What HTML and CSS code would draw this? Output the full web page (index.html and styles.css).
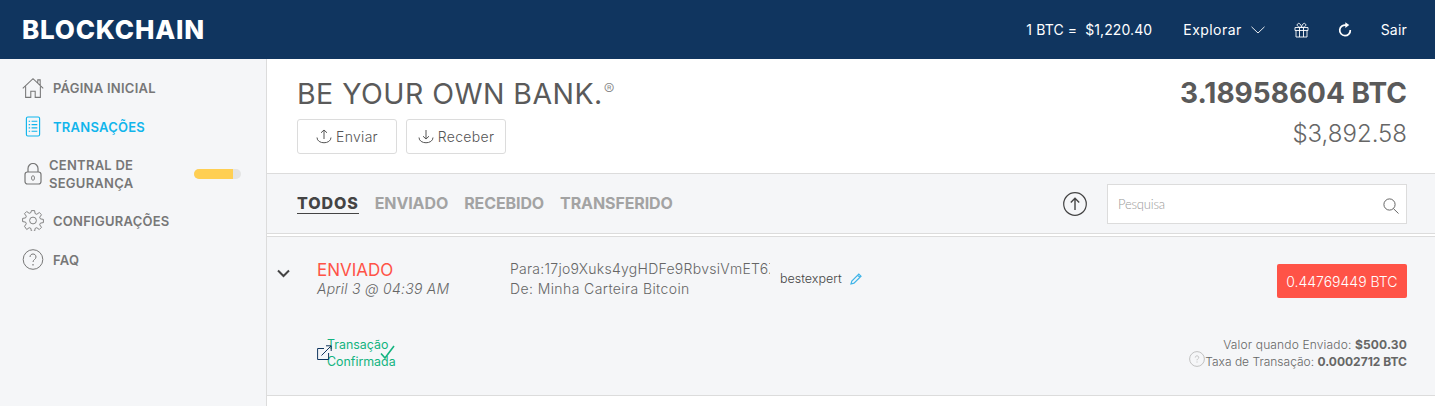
FILE: index.html
```html
<!DOCTYPE html>
<html lang="en">
<head>
    <meta charset="UTF-8">
    <meta name="viewport" content="width=device-width, initial-scale=1.0">
    <title>Blockchain Wallet</title>
    <link rel="stylesheet" href="styles.css">
</head>
<body>
    <header class="topbar">
        <div class="logo">BLOCKCHAIN</div>
        <nav class="topnav">
            <span class="rate">1 BTC = &nbsp;$1,220.40</span>
            <a href="#" class="explore">Explorar
                <svg width="14" height="8" viewBox="0 0 14 8"><path d="M.5.8 7 7l6.500-6.200" fill="none" stroke="#fff" stroke-width=".9"/></svg>
            </a>
            <svg class="gift" width="15" height="16" viewBox="0 0 15 16" fill="none" stroke="#fff" stroke-width=".9"><path d="M1 5.500h13v3H1zM2 8.500V15h11V8.500M5.500 5.500V15M9.500 5.500V15M7.500 5.500C4 5.500 2.500 3.500 3.500 2s3.500-.5 4 3.500c.5-4 3-5 4-3.500s-.5 3.500-4 3.500z"/></svg>
            <svg class="refresh" width="14" height="15" viewBox="0 0 14 15" fill="none"><path d="M8.200 3.200A5.300 5.300 0 1 0 12.300 8" stroke="#fff" stroke-width="1.700"/><path d="M7.300 .3v5.600l4-2.800z" fill="#fff"/></svg>
            <a href="#" class="logout">Sair</a>
        </nav>
    </header>

    <div class="layout">
        <aside class="sidebar">
            <a href="#" class="side-item">
                <svg class="side-icon" width="23" height="22" viewBox="0 0 23 22" fill="none" stroke="#777" stroke-width="1.100"><path d="M.8 11.500 11.500 1.200 22.200 11.500M3.800 9.500v11.300h5.400v-6.500h4.600v6.500h5.400V9.500M16.500 5.500V2.500h2.500v5.300"/></svg>
                <span>PÁGINA INICIAL</span>
            </a>
            <a href="#" class="side-item active">
                <svg class="side-icon" width="23" height="21" viewBox="0 0 23 21" fill="none" stroke="#10b5ec" stroke-width="1.200"><rect x="4.600" y=".6" width="13.800" height="19.800" rx="1.500"/><path d="M7 5h1.500M10 5h6M7 8.500h1.500M10 8.500h6M7 12h1.500M10 12h6M7 15.500h1.500M10 15.500h6"/></svg>
                <span>TRANSAÇÕES</span>
            </a>
            <a href="#" class="side-item security">
                <svg class="side-icon" width="18" height="22" viewBox="0 0 18 22" fill="none" stroke="#777" stroke-width="1.200"><path d="M4 9V5.500a5 5 0 0 1 10 0V9"/><rect x="1" y="9" width="16" height="12" rx="2.500"/><ellipse cx="9" cy="15" rx="1.500" ry="2.300" stroke-width=".9"/></svg>
                <span class="security-label">CENTRAL DE SEGURANÇA</span>
                <span class="meter"><span class="meter-fill" style="width: 83%"></span></span>
            </a>
            <a href="#" class="side-item">
                <svg class="side-icon" width="21" height="21" viewBox="0 0 21 21" fill="none" stroke="#777" stroke-width=".9"><circle cx="10.500" cy="10.500" r="3.400"/><path d="M8.900 .6h3.200l.5 3 1.700.7 2.500-1.800 2.200 2.200-1.800 2.500.7 1.700 3 .5v3.200l-3 .5-.7 1.700 1.800 2.500-2.200 2.200-2.500-1.800-1.700.7-.5 3H8.900l-.5-3-1.700-.7-2.500 1.800L2 16.300l1.800-2.500-.7-1.700-3-.5V8.400l3-.5.700-1.700L2 3.700l2.200-2.200 2.500 1.800 1.700-.7z"/></svg>
                <span>CONFIGURAÇÕES</span>
            </a>
            <a href="#" class="side-item">
                <svg class="side-icon" width="21" height="21" viewBox="0 0 21 21" fill="none" stroke="#777" stroke-width="1"><circle cx="10.500" cy="10.500" r="9.800"/><path d="M7.500 8c0-4 6-4 6 0 0 2.500-3 2.500-3 5"/><path d="M10.500 15v1.400" stroke-width="1.200"/></svg>
                <span>FAQ</span>
            </a>
        </aside>

        <main class="content">
            <section class="hero">
                <div class="hero-left">
                    <h1 class="tagline">BE YOUR OWN BANK.<sup>®</sup></h1>
                    <div class="hero-actions">
                        <a href="#" class="btn">
                            <svg width="16" height="15" viewBox="0 0 16 15" fill="none" stroke="#555" stroke-width="1"><path d="M1 8.500c0 7 14 7 14 0M8 10V1M5 3.800 8 1l3 2.800"/></svg>
                            Enviar
                        </a>
                        <a href="#" class="btn">
                            <svg width="16" height="15" viewBox="0 0 16 15" fill="none" stroke="#555" stroke-width="1"><path d="M1 8.500c0 7 14 7 14 0M8 1v9M5 7.200 8 10l3-2.800"/></svg>
                            Receber
                        </a>
                    </div>
                </div>
                <div class="balance">
                    <div class="balance-btc">3.18958604 BTC</div>
                    <div class="balance-usd">$3,892.58</div>
                </div>
            </section>

            <section class="filters">
                <div class="tabs">
                    <a href="#" class="tab current">TODOS</a>
                    <a href="#" class="tab">ENVIADO</a>
                    <a href="#" class="tab">RECEBIDO</a>
                    <a href="#" class="tab">TRANSFERIDO</a>
                </div>
                <svg class="export" width="24" height="24" viewBox="0 0 24 24" fill="none" stroke="#444" stroke-width="1.200"><circle cx="12" cy="12" r="11.300"/><path d="M12 18V6.500M7.800 10.500 12 6.300l4.200 4.200" stroke-width="1.400"/></svg>
                <div class="search">
                    <span class="search-text">Pesquisa</span>
                    <svg class="search-icon" width="16" height="16" viewBox="0 0 16 16" fill="none" stroke="#555" stroke-width=".9"><circle cx="6.500" cy="6.500" r="5.600"/><path d="m10.500 10.700 5 4.800"/></svg>
                </div>
            </section>

            <section class="tx">
                <div class="tx-top">
                    <svg class="tx-toggle" width="13" height="9" viewBox="0 0 13 9" fill="none" stroke="#444" stroke-width="2"><path d="m1 1.500 5.500 5.500L12 1.500"/></svg>
                    <div class="tx-status">
                        <div class="tx-type">ENVIADO</div>
                        <div class="tx-date">April 3 @ 04:39 AM</div>
                    </div>
                    <div class="tx-addr">
                        <div class="tx-to">Para:17jo9Xuks4ygHDFe9RbvsiVmET6Zqw8kL</div>
                        <div class="tx-from">De: Minha Carteira Bitcoin</div>
                    </div>
                    <div class="tx-label">
                        <span>bestexpert</span>
                        <svg width="12" height="12" viewBox="0 0 12 12" fill="none" stroke="#3fb4e8" stroke-width="1.200"><path d="M1 11l.8-3L8.800 1l2.200 2.200-7 7zM7.600 2.200l2.200 2.200"/></svg>
                    </div>
                    <div class="tx-amount">0.44769449 BTC</div>
                </div>
                <div class="tx-bottom">
                    <div class="tx-confirm">
                        <svg class="tx-link" width="15" height="15" viewBox="0 0 15 15" fill="none" stroke="#10355f" stroke-width="1"><path d="M7 3.500H.6v11h11V8M4.500 10.500 14 1M9 .8h5.200V6"/></svg>
                        <span class="tx-confirm-text">Transação Confirmada</span>
                        <svg class="tx-check" width="15" height="14" viewBox="0 0 15 14" fill="none" stroke="#13b47f" stroke-width="1.600"><path d="M1 8.500 5 13 14 1"/></svg>
                    </div>
                    <div class="tx-values">
                        <div class="tx-worth">Valor quando Enviado: <b>$500.30</b></div>
                        <div class="tx-fee">
                            <svg class="tx-help" width="16" height="16" viewBox="0 0 16 16" fill="none" stroke="#bbb" stroke-width=".9"><circle cx="8" cy="8" r="7.400"/><path d="M6.300 6.500c0-2.200 3.400-2.200 3.400 0 0 1.400-1.700 1.400-1.700 2.800M8 10.500v1"/></svg>
                            <span>Taxa de Transação: <b>0.0002712 BTC</b></span>
                        </div>
                    </div>
                </div>
            </section>
        </main>
    </div>
</body>
</html>
```

FILE: styles.css
```css
/* General Styles */
* {
    box-sizing: border-box;
}

body {
    font-family: 'Inter', 'Liberation Sans', sans-serif;
    margin: 0;
    padding: 0;
    background-color: #fff;
    color: #555;
    overflow: hidden;
}

a {
    color: inherit;
    text-decoration: none;
}

/* Header */
.topbar {
    height: 59px;
    background-color: #10355f;
    color: #fff;
    display: flex;
    justify-content: space-between;
    align-items: center;
    padding: 0 28px 0 22px;
}

.logo {
    font-size: 26px;
    font-weight: 800;
    letter-spacing: 0.8px;
}

.topnav {
    display: flex;
    align-items: center;
    font-size: 14px;
    letter-spacing: 0.2px;
}

.rate {
    letter-spacing: 0.1px;
    margin-right: 31px;
}

.explore {
    display: flex;
    align-items: center;
    gap: 9px;
    margin-right: 29px;
    letter-spacing: 0.45px;
}

.gift {
    margin-right: 29px;
}

.refresh {
    margin-right: 29px;
}

/* Sidebar */
.layout {
    display: flex;
    height: 347px;
}

.sidebar {
    width: 267px;
    flex-shrink: 0;
    background-color: #f5f6f8;
    border-right: 1px solid #dcdcdc;
    padding-top: 9px;
}

.side-item {
    height: 39px;
    display: flex;
    align-items: center;
    padding-left: 22px;
    color: #777;
    font-size: 13px;
    font-weight: 600;
    letter-spacing: 0.25px;
}

.side-icon {
    margin-right: 9px;
    width: 22px;
    flex-shrink: 0;
}

.side-item.active {
    color: #10b5ec;
}

.side-item.security {
    height: 55px;
    line-height: 18px;
}

.security .side-icon {
    margin-right: 5px;
}

.security-label {
    width: 135px;
    margin-right: 10px;
}

.meter {
    width: 47px;
    height: 10px;
    border-radius: 5px;
    background-color: #e4e4e4;
    overflow: hidden;
}

.meter-fill {
    display: block;
    height: 100%;
    background-color: #ffcf53;
}

/* Balance */
.content {
    flex: 1;
    min-width: 0;
}

.hero {
    height: 115px;
    display: flex;
    justify-content: space-between;
    padding: 19px 28px 0 30px;
    border-bottom: 1px solid #dcdcdc;
}

.tagline {
    margin: 0;
    font-size: 28.5px;
    line-height: 32px;
    font-weight: 400;
    letter-spacing: 0.45px;
    color: #5a5a5a;
}

.tagline sup {
    font-size: 16px;
    line-height: 0;
    font-weight: 300;
    color: #888;
    vertical-align: 9px;
    margin-left: 1px;
}

.hero-actions {
    display: flex;
    gap: 9px;
    margin-top: 9px;
}

.btn {
    width: 100px;
    height: 35px;
    display: flex;
    align-items: center;
    justify-content: center;
    gap: 4px;
    border: 1px solid #dcdcdc;
    border-radius: 3px;
    font-size: 14px;
    font-weight: 300;
    letter-spacing: 0.3px;
}

.balance {
    text-align: right;
}

.balance-btc {
    font-size: 28px;
    line-height: 30px;
    font-weight: 700;
    color: #5a5a5a;
}

.balance-usd {
    font-size: 24px;
    line-height: 30px;
    font-weight: 300;
    margin-top: 11px;
    color: #666;
}

/* Filters */
.filters {
    height: 60px;
    background-color: #f5f6f8;
    border-bottom: 1px solid #dcdcdc;
    display: flex;
    align-items: center;
    padding: 0 28px 0 30px;
}

.tabs {
    display: flex;
    gap: 16px;
    flex: 1;
}

.tab {
    font-size: 16px;
    font-weight: 700;
    letter-spacing: -0.1px;
    color: #a3a3a3;
    line-height: 19px;
}

.tab.current {
    color: #444;
    font-weight: 800;
    letter-spacing: 0.9px;
    border-bottom: 1px solid #444;
}

.export {
    margin-right: 20px;
}

.search {
    width: 300px;
    height: 40px;
    background-color: #fff;
    border: 1px solid #dcdcdc;
    display: flex;
    align-items: center;
    justify-content: space-between;
    padding: 1px 7px 0 10px;
}

.search-text {
    font-family: 'Lato', sans-serif;
    font-size: 13px;
    font-weight: 300;
    letter-spacing: -0.2px;
    color: #999;
}

.search-icon {
    margin-top: 3px;
}

/* Transaction */
.tx {
    margin-top: 2px;
    height: 160px;
    background-color: #f5f6f8;
    border-top: 1px solid #dcdcdc;
    border-bottom: 1px solid #dcdcdc;
    padding: 22px 28px 0 10px;
}

.tx-top {
    display: flex;
    align-items: flex-start;
    height: 76px;
}

.tx-toggle {
    margin: 10px 27px 0 0;
    flex-shrink: 0;
}

.tx-status {
    width: 193px;
}

.tx-type {
    font-size: 17px;
    line-height: 20px;
    padding-top: 1px;
    margin-bottom: -1px;
    color: #ff5347;
}

.tx-date {
    font-size: 14px;
    line-height: 20px;
    letter-spacing: 0.25px;
    font-style: italic;
    font-weight: 300;
    color: #666;
}

.tx-addr {
    width: 260px;
    font-size: 14px;
    line-height: 20px;
    letter-spacing: 0.27px;
    font-weight: 300;
    color: #666;
    white-space: nowrap;
}

.tx-to {
    overflow: hidden;
}

.tx-from {
    letter-spacing: 0.4px;
}

.tx-label {
    display: flex;
    align-items: center;
    gap: 8px;
    margin-left: 10px;
    padding-top: 10px;
    line-height: 20px;
    font-size: 12.5px;
    font-weight: 300;
    color: #444;
}

.tx-amount {
    margin: 5px 0 0 auto;
    height: 34px;
    padding: 0 9.5px;
    display: flex;
    align-items: center;
    background-color: #ff5347;
    border-radius: 2px;
    color: #fff;
    font-size: 14px;
    font-weight: 300;
}

.tx-bottom {
    display: flex;
    justify-content: space-between;
    align-items: flex-start;
    padding-left: 39px;
    margin-top: 1px;
}

.tx-confirm {
    position: relative;
    padding: 0 0 0 11px;
    width: 92px;
    font-size: 12.4px;
    line-height: 17px;
    font-weight: 400;
    color: #13b47f;
}

.tx-confirm-text {
    display: block;
}

.tx-link {
    position: absolute;
    left: 1px;
    top: 9px;
}

.tx-check {
    position: absolute;
    left: 64px;
    top: 9px;
}

.tx-values {
    text-align: right;
    font-size: 12px;
    line-height: 17px;
    font-weight: 300;
    color: #666;
}

.tx-values b {
    font-weight: 700;
}

.tx-worth {
    letter-spacing: 0.15px;
}

.tx-fee {
    display: flex;
    align-items: center;
    justify-content: flex-end;
}

.tx-help {
    margin-top: -5px;
}
```
